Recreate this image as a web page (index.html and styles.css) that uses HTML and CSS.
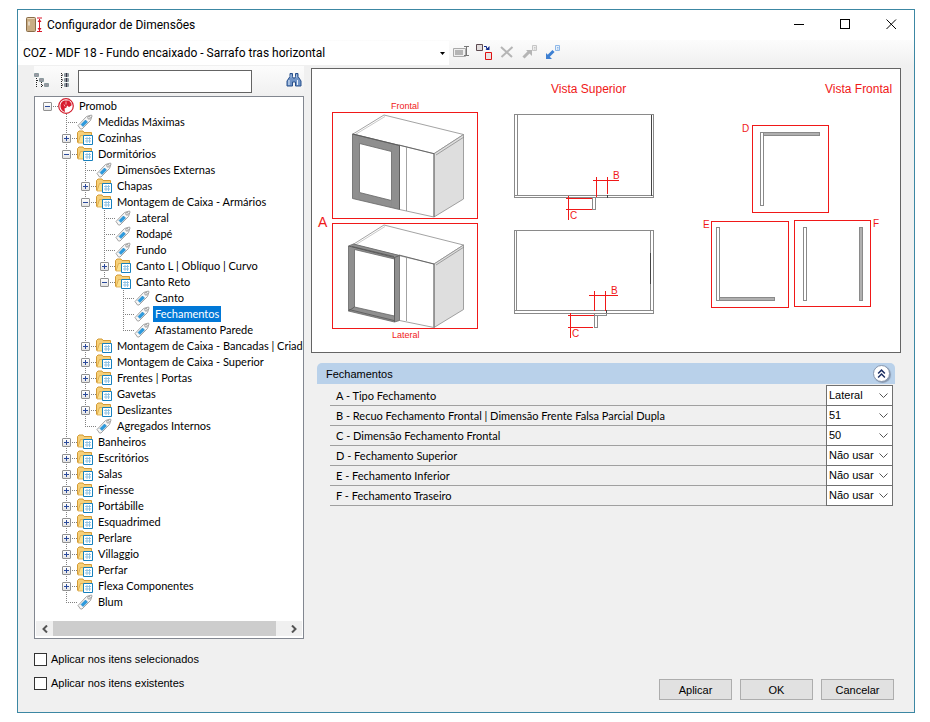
FILE: index.html
```html
<!DOCTYPE html>
<html lang="pt-BR">

<head>
    <meta charset="UTF-8" />
    <meta name="viewport" content="width=device-width, initial-scale=1.0" />
    <title>Configurador de Dimensões</title>
    <link rel="stylesheet" href="styles.css">
</head>

<body>
    <!-- shared icons -->
    <svg class="sprite" aria-hidden="true">
        <symbol id="tag" viewBox="0 0 16 16">
            <path d="M1 11.5 9.5 2.5 14.5 1 15 2 13.5 6.5 5 15 3.5 15z" fill="#f7f7f7" stroke="#999" stroke-width=".9" />
            <path d="M4 10.5 8.5 6 10.5 8 6 12.5z" fill="#2a9be0" stroke="#2080bd" stroke-width=".6" />
            <circle cx="12" cy="3.8" r="1.3" fill="#fff" stroke="#888" stroke-width=".8" />
        </symbol>
        <symbol id="folder" viewBox="0 0 16 16">
            <path d="M.5 12.5V2.5L2 1H6L7 2.5H14.5V8" fill="#f6d079" stroke="#d39a35" />
            <path d="M1 13 3.5 5.5H14.5V13z" fill="#fde18d" stroke="#d9a548" stroke-width=".8" />
            <path d="M6.500 5.500h9v9h-9z" fill="#fff" stroke="#1680bd" />
            <path d="M8 8.500h6M8 11h6M10 7v6M12.500 7v6" stroke="#8fc3e4" />
        </symbol>
        <symbol id="promob" viewBox="0 0 16 16">
            <circle cx="8" cy="8" r="7.300" fill="#fff" stroke="#d3202f" stroke-width="1.200" />
            <path d="M6 2.500C3.500 3.500 2 6 2.500 9 3 11.500 4.500 13.200 7 14L6.500 10.500 8.500 9.500 9 7.500 11 9 13.500 7.500 13.500 5.500 11 2.500z" fill="#d81e30" />
            <path d="M8 3.500v3M6 6.500l1 2" stroke="#fbd5d8" stroke-width=".8" />
        </symbol>
    </svg>

    <main class="window">
        <header class="title-bar">
            <svg class="app-icon" viewBox="0 0 17 16" aria-hidden="true">
                <rect x=".5" y=".5" width="9" height="14" rx="1" fill="#c9ad84" stroke="#8a6d49" />
                <path d="M1.500 1.500h7" stroke="#ead9ba" />
                <path d="M3 4.500v4" stroke="#fff" />
                <path d="M11 1h5M11 14.500h5M13.500 2v12" stroke="#d8172a" />
                <path d="M11.500 5 13.500 2l2 3zM11.500 11l2 3 2-3z" fill="#d8172a" />
            </svg>
            <h1 class="title">Configurador de Dimensões</h1>
            <div class="window-buttons">
                <button class="window-btn" aria-label="Minimizar"><svg viewBox="0 0 11 11"><path d="M0 5.500h10" /></svg></button>
                <button class="window-btn" aria-label="Maximizar"><svg viewBox="0 0 11 11"><path d="M.5 .5h9v9h-9z" /></svg></button>
                <button class="window-btn" aria-label="Fechar"><svg viewBox="0 0 11 11"><path class="smooth" d="M.5 .5l9.500 9.500M10 .5L.5 10" /></svg></button>
            </div>
        </header>

        <div class="toolbar">
            <select class="config-select" aria-label="Configuração">
                <option>COZ - MDF 18 - Fundo encaixado - Sarrafo tras horizontal</option>
            </select>
            <div class="tools">
                <button class="tool-btn" aria-label="Renomear">
                    <svg viewBox="0 0 16 16">
                        <path d="M.5 4.500h12v8H.5z" fill="#eee" stroke="#aaa" />
                        <path d="M2 6h8v5H2z" fill="#b4b4b4" />
                        <path d="M11 2.500h5M11 11.500h5M13.500 3v9" stroke="#777" />
                    </svg>
                </button>
                <button class="tool-btn" aria-label="Duplicar">
                    <svg viewBox="0 0 16 16">
                        <path d="M.5 .5h6v6h-6z" fill="#e3dede" stroke="#5d4a50" />
                        <path d="M9.500 8.500h6v7h-6z" fill="#e9e4e4" stroke="#df1111" />
                        <path d="M8 2.500h2.500v2h2" fill="none" stroke="#102a8a" />
                        <path d="M13.500 2v4h-4z" fill="#102a8a" />
                    </svg>
                </button>
                <button class="tool-btn" aria-label="Excluir">
                    <svg viewBox="0 0 16 16"><path d="M2 3l11 10M13.500 3l-11 10" fill="none" stroke="#b5b5b5" stroke-width="2" /></svg>
                </button>
                <button class="tool-btn" aria-label="Exportar">
                    <svg viewBox="0 0 16 16">
                        <path d="M1.500 13.500 7 8" stroke="#b5b5b5" stroke-width="3" />
                        <path d="M4 6h6v6z" fill="#b5b5b5" />
                        <path d="M10.500 1.500h4v5h-4zM12 3.500h1.500M12 5h1.500" fill="#eee" stroke="#c6c6c6" />
                    </svg>
                </button>
                <button class="tool-btn" aria-label="Importar">
                    <svg viewBox="0 0 16 16">
                        <path d="M3 12.500 8.500 7" stroke="#3e80d2" stroke-width="3" />
                        <path d="M1 9v6h6z" fill="#3e80d2" />
                        <path d="M10.500 1.500h4v5h-4zM12 3.500h1.500M12 5h1.500" fill="#e8f2fc" stroke="#8fb8e8" />
                    </svg>
                </button>
            </div>
        </div>

        <div class="content">
            <section class="sidebar">
                <div class="search-bar">
                    <button class="search-btn" aria-label="Recolher tudo">
                        <svg viewBox="0 0 16 16">
                            <path d="M2.500 5v10M7.500 9v6M3 7.500h3M8 12.500h3" fill="none" stroke="#222" stroke-dasharray="1 1" />
                            <path d="M.5 .5h4v3h-4zM5.500 5.500h4v3h-4zM10.500 10.500h4v3h-4z" fill="#fff" stroke="#8a9a9e" />
                            <path d="M1 2h3M6 7h3M11 12h3" stroke="#334" />
                        </svg>
                    </button>
                    <button class="search-btn" aria-label="Expandir tudo">
                        <svg viewBox="0 0 16 16">
                            <path d="M5.500 0v15M6 2h3M6 7h3M6 12h3" fill="none" stroke="#222" stroke-dasharray="1 1" />
                            <path d="M8.500 .5h4v3h-4zM8.500 5.500h4v3h-4zM8.500 10.500h4v3h-4z" fill="#fff" stroke="#8a9a9e" />
                            <path d="M9 2h3M9 7h3M9 12h3M10.500 0v4M10.500 5v4M10.500 10v4" stroke="#334" />
                        </svg>
                    </button>
                    <input class="search-input" type="text" aria-label="Pesquisar">
                    <button class="search-btn find-btn" aria-label="Localizar">
                        <svg viewBox="0 0 16 16">
                            <path d="M4 .5h2.500v3L7 5h2l.5-1.500v-3H12v3l3 4.500v5h-5.500V9h-3v4H1V8l3-4.500z" fill="#6f93c6" stroke="#29508c" />
                            <path d="M3 7v5M11.500 7v5" stroke="#e4eefb" />
                            <path d="M5 1.500v3M10.500 1.500v3" stroke="#a9c2e2" />
                        </svg>
                    </button>
                </div>

                <nav class="tree-box" aria-label="Dimensões">
                    <ul class="tree">
                        <li>
                            <div class="node"><button class="toggle open" aria-label="Recolher Promob"></button><svg class="icon"><use href="#promob" /></svg><a href="#" class="label">Promob</a></div>
                            <ul>
                                <li><div class="node leaf"><svg class="icon"><use href="#tag" /></svg><a href="#" class="label">Medidas Máximas</a></div></li>
                                <li><div class="node"><button class="toggle" aria-label="Expandir Cozinhas"></button><svg class="icon"><use href="#folder" /></svg><a href="#" class="label">Cozinhas</a></div></li>
                                <li>
                                    <div class="node"><button class="toggle open" aria-label="Recolher Dormitórios"></button><svg class="icon"><use href="#folder" /></svg><a href="#" class="label">Dormitórios</a></div>
                                    <ul>
                                        <li><div class="node leaf"><svg class="icon"><use href="#tag" /></svg><a href="#" class="label">Dimensões Externas</a></div></li>
                                        <li><div class="node"><button class="toggle" aria-label="Expandir Chapas"></button><svg class="icon"><use href="#folder" /></svg><a href="#" class="label">Chapas</a></div></li>
                                        <li>
                                            <div class="node"><button class="toggle open" aria-label="Recolher Armários"></button><svg class="icon"><use href="#folder" /></svg><a href="#" class="label">Montagem de Caixa - Armários</a></div>
                                            <ul>
                                                <li><div class="node leaf"><svg class="icon"><use href="#tag" /></svg><a href="#" class="label">Lateral</a></div></li>
                                                <li><div class="node leaf"><svg class="icon"><use href="#tag" /></svg><a href="#" class="label">Rodapé</a></div></li>
                                                <li><div class="node leaf"><svg class="icon"><use href="#tag" /></svg><a href="#" class="label">Fundo</a></div></li>
                                                <li><div class="node"><button class="toggle" aria-label="Expandir Canto L"></button><svg class="icon"><use href="#folder" /></svg><a href="#" class="label">Canto L | Oblíquo | Curvo</a></div></li>
                                                <li>
                                                    <div class="node"><button class="toggle open" aria-label="Recolher Canto Reto"></button><svg class="icon"><use href="#folder" /></svg><a href="#" class="label">Canto Reto</a></div>
                                                    <ul>
                                                        <li><div class="node leaf"><svg class="icon"><use href="#tag" /></svg><a href="#" class="label">Canto</a></div></li>
                                                        <li><div class="node leaf"><svg class="icon"><use href="#tag" /></svg><a href="#" class="label selected">Fechamentos</a></div></li>
                                                        <li><div class="node leaf"><svg class="icon"><use href="#tag" /></svg><a href="#" class="label">Afastamento Parede</a></div></li>
                                                    </ul>
                                                </li>
                                            </ul>
                                        </li>
                                        <li><div class="node"><button class="toggle" aria-label="Expandir Bancadas"></button><svg class="icon"><use href="#folder" /></svg><a href="#" class="label">Montagem de Caixa - Bancadas | Criado</a></div></li>
                                        <li><div class="node"><button class="toggle" aria-label="Expandir Superior"></button><svg class="icon"><use href="#folder" /></svg><a href="#" class="label">Montagem de Caixa - Superior</a></div></li>
                                        <li><div class="node"><button class="toggle" aria-label="Expandir Frentes"></button><svg class="icon"><use href="#folder" /></svg><a href="#" class="label">Frentes | Portas</a></div></li>
                                        <li><div class="node"><button class="toggle" aria-label="Expandir Gavetas"></button><svg class="icon"><use href="#folder" /></svg><a href="#" class="label">Gavetas</a></div></li>
                                        <li><div class="node"><button class="toggle" aria-label="Expandir Deslizantes"></button><svg class="icon"><use href="#folder" /></svg><a href="#" class="label">Deslizantes</a></div></li>
                                        <li><div class="node leaf"><svg class="icon"><use href="#tag" /></svg><a href="#" class="label">Agregados Internos</a></div></li>
                                    </ul>
                                </li>
                                <li><div class="node"><button class="toggle" aria-label="Expandir Banheiros"></button><svg class="icon"><use href="#folder" /></svg><a href="#" class="label">Banheiros</a></div></li>
                                <li><div class="node"><button class="toggle" aria-label="Expandir Escritórios"></button><svg class="icon"><use href="#folder" /></svg><a href="#" class="label">Escritórios</a></div></li>
                                <li><div class="node"><button class="toggle" aria-label="Expandir Salas"></button><svg class="icon"><use href="#folder" /></svg><a href="#" class="label">Salas</a></div></li>
                                <li><div class="node"><button class="toggle" aria-label="Expandir Finesse"></button><svg class="icon"><use href="#folder" /></svg><a href="#" class="label">Finesse</a></div></li>
                                <li><div class="node"><button class="toggle" aria-label="Expandir Portábille"></button><svg class="icon"><use href="#folder" /></svg><a href="#" class="label">Portábille</a></div></li>
                                <li><div class="node"><button class="toggle" aria-label="Expandir Esquadrimed"></button><svg class="icon"><use href="#folder" /></svg><a href="#" class="label">Esquadrimed</a></div></li>
                                <li><div class="node"><button class="toggle" aria-label="Expandir Perlare"></button><svg class="icon"><use href="#folder" /></svg><a href="#" class="label">Perlare</a></div></li>
                                <li><div class="node"><button class="toggle" aria-label="Expandir Villaggio"></button><svg class="icon"><use href="#folder" /></svg><a href="#" class="label">Villaggio</a></div></li>
                                <li><div class="node"><button class="toggle" aria-label="Expandir Perfar"></button><svg class="icon"><use href="#folder" /></svg><a href="#" class="label">Perfar</a></div></li>
                                <li><div class="node"><button class="toggle" aria-label="Expandir Flexa"></button><svg class="icon"><use href="#folder" /></svg><a href="#" class="label">Flexa Componentes</a></div></li>
                                <li><div class="node leaf"><svg class="icon"><use href="#tag" /></svg><a href="#" class="label">Blum</a></div></li>
                            </ul>
                        </li>
                    </ul>
                    <div class="scrollbar">
                        <button class="scroll-btn" aria-label="Rolar para a esquerda"><svg viewBox="0 0 8 8"><path d="M6 .5 2.500 4 6 7.500" /></svg></button>
                        <div class="scroll-track"><div class="scroll-thumb"></div></div>
                        <button class="scroll-btn" aria-label="Rolar para a direita"><svg viewBox="0 0 8 8"><path d="M2 .5 5.500 4 2 7.500" /></svg></button>
                    </div>
                </nav>

                <div class="checks">
                    <label class="check"><input type="checkbox">Aplicar nos itens selecionados</label>
                    <label class="check"><input type="checkbox">Aplicar nos itens existentes</label>
                </div>
            </section>

            <section class="main">
                <svg class="drawing" viewBox="312 69 588 283" role="img" aria-label="Vistas do fechamento">
                    <g class="title-text">
                        <text x="551" y="93">Vista Superior</text>
                        <text x="825" y="93">Vista Frontal</text>
                        <text class="big" x="318" y="227">A</text>
                    </g>
                    <g class="small-text">
                        <text x="391" y="109">Frontal</text>
                        <text x="392" y="338">Lateral</text>
                    </g>
                    <g class="mark-text">
                        <text x="613" y="179">B</text>
                        <text x="570" y="219">C</text>
                        <text x="611" y="294">B</text>
                        <text x="572" y="337">C</text>
                        <text x="742" y="132">D</text>
                        <text x="703" y="228">E</text>
                        <text x="873" y="227">F</text>
                    </g>

                    <!-- cabinet, front closing -->
                    <g class="outline">
                        <path d="M353 134 384 115 463.500 134.500 434 153.700z" fill="#fff" />
                        <path d="M354.500 135 385 116.500" stroke="#bbb" />
                        <path d="M434 153.700 463.500 134.500V199L434 217z" fill="#dedede" />
                        <path class="dark" d="M434 217V153.700L399 145" />
                        <path d="M436 155 464 137M399.500 209.500 434 217M406.500 147V211" />
                        <path class="frame" fill-rule="evenodd" d="M352.500 134 399.500 145.500V209.500L352.500 198.500zM359.500 143.500V192.500L391.500 200.500V151.500z" />
                        <path d="M359 136V143M359 192V200M391.500 144V151M391.500 200V207.500" />
                        <path class="dark" d="M352.500 134 399.500 145.500V209.500" />
                    </g>

                    <!-- cabinet, side closing -->
                    <g class="outline">
                        <path d="M353 244.500 384 225 463.500 245 434 264z" fill="#fff" />
                        <path d="M354.500 245.500 385 226.500" stroke="#bbb" />
                        <path d="M434 264 463.500 245V309.500L434 327.500z" fill="#dedede" />
                        <path class="dark" d="M434 327.500V264L399 255" />
                        <path d="M436 265 464 247M399.500 320.500 434 327.500M406.500 257V321" />
                        <path class="frame" fill-rule="evenodd" d="M348.500 246 353.500 244 399.500 255.500V320.500L394.500 322 348.500 311zM354.500 249.500V307L394.500 316V259z" />
                        <path class="dark" d="M348.500 246 394.500 257.500V322M394.500 257.500 399.500 255.500M348.500 311 354.500 307M349 309.500 394 320.500M352 246.500 394 256.500" />
                    </g>

                    <!-- top views -->
                    <g class="plan">
                        <path d="M514.500 114.500h139v83h-139zM514.500 195.500h139M517.500 114.500v81M592.500 197.500h3v12h-3z" />
                        <path class="plan-dark" d="M651.500 115v81M607.500 195v3" />
                        <path d="M514.500 230.500h139v83h-139zM514.500 310.500h139M516.500 230.500v80M594.500 313.500h12v2h-12zM594.500 315.500h3v12h-3z" />
                        <path d="M650.500 231v79" />
                        <path class="plan-dark" d="M650.500 253v31M606.500 310v3" />
                    </g>
                    <path class="dim" d="M566 198.500h26M566 209.500h26M568.500 196v24M593 180.500h26M596.500 177v20M607.500 177v17M568 315.500h26M568 327.500h25M570.500 313v25M589 295.500h29M594.500 291v20M605.500 291v20" />

                    <!-- front views -->
                    <g class="plan">
                        <path fill="#fff" d="M760.500 132.500h3v73h-3zM716.500 227.500h3v73h-3zM803.500 227.500h3v73h-3z" />
                        <path fill="#b0b0b0" d="M763.500 132.500h56v3h-56zM719.500 297.500h55v3h-55zM859.500 227.500h3v73h-3z" />
                    </g>
                    <path class="red-box" d="M332.500 112.500h145v106h-145zM332.500 223.500h145v105h-145zM752.500 125.500h76v87h-76zM711.500 221.500h77v86h-77zM794.500 220.500h76v86h-76z" />
                </svg>

                <div class="panel">
                    <div class="panel-header">
                        <h2 class="panel-title">Fechamentos</h2>
                        <button class="collapse-btn" aria-label="Recolher painel"><svg viewBox="0 0 8 8"><path d="M1 4 4 1l3 3M1 7.500l3-3 3 3" /></svg></button>
                    </div>
                    <div class="rows">
                        <div class="row">
                            <label for="campo-a">A - Tipo Fechamento</label>
                            <select id="campo-a"><option>Lateral</option><option>Frontal</option></select>
                        </div>
                        <div class="row">
                            <label for="campo-b">B - Recuo Fechamento Frontal | Dimensão Frente Falsa Parcial Dupla</label>
                            <select id="campo-b"><option>51</option></select>
                        </div>
                        <div class="row">
                            <label for="campo-c">C - Dimensão Fechamento Frontal</label>
                            <select id="campo-c"><option>50</option></select>
                        </div>
                        <div class="row">
                            <label for="campo-d">D - Fechamento Superior</label>
                            <select id="campo-d"><option>Não usar</option></select>
                        </div>
                        <div class="row">
                            <label for="campo-e">E - Fechamento Inferior</label>
                            <select id="campo-e"><option>Não usar</option></select>
                        </div>
                        <div class="row">
                            <label for="campo-f">F - Fechamento Traseiro</label>
                            <select id="campo-f"><option>Não usar</option></select>
                        </div>
                    </div>
                </div>

                <div class="actions">
                    <button class="btn">Aplicar</button>
                    <button class="btn">OK</button>
                    <button class="btn">Cancelar</button>
                </div>
            </section>
        </div>
    </main>
</body>

</html>
```
FILE: styles.css
```css
* {
    box-sizing: border-box;
}

body {
    margin: 0;
    padding: 9px 15px 9px 17px;
    min-height: 100vh;
    display: flex;
    background: #fff;
    color: #000;
    font-family: "Liberation Sans", Arial, sans-serif;
    font-size: 11px;
}

button,
input,
select {
    font: inherit;
    color: inherit;
    margin: 0;
    padding: 0;
    border-radius: 0;
}

button {
    border: none;
    background: none;
}

ul {
    margin: 0;
    padding: 0;
    list-style: none;
}

.sprite {
    display: none;
}

.window {
    flex: 1;
    display: flex;
    flex-direction: column;
    min-width: 0;
    border: 1px solid #3c87a3;
    background: #f0f0f0;
}

/* title bar */
.title-bar {
    display: flex;
    align-items: center;
    height: 30px;
    padding-left: 8px;
    background: #fff;
}

.app-icon {
    width: 17px;
    height: 16px;
    margin-right: 4px;
}

.title {
    flex: 1;
    margin: 0;
    font-family: Roboto, sans-serif;
    font-size: 12px;
    font-weight: 400;
}

.window-buttons {
    display: flex;
}

.window-btn {
    width: 46px;
    height: 28px;
}

.window-btn svg {
    width: 11px;
    height: 11px;
    fill: none;
    stroke: #000;
    shape-rendering: crispEdges;
}

.window-btn .smooth {
    shape-rendering: auto;
}

/* toolbar */
.toolbar {
    display: flex;
    align-items: center;
    height: 26px;
    background: linear-gradient(#fcfcfc, #f0f0f0);
}

.config-select {
    width: 431px;
    height: 24px;
    padding-left: 5px;
    border: none;
    appearance: none;
    background: #fff url("data:image/svg+xml,%3Csvg xmlns='http://www.w3.org/2000/svg' width='5' height='3'%3E%3Cpath d='M0 0h5L2.5 3z'/%3E%3C/svg%3E") no-repeat right 4px center;
    font-family: Roboto, sans-serif;
    font-size: 12px;
}

.tools {
    display: flex;
    gap: 7px;
    padding: 0 0 2px 4px;
}

.tool-btn {
    width: 16px;
    height: 16px;
}

.tool-btn svg,
.search-btn svg {
    display: block;
    width: 16px;
    height: 16px;
}

/* content */
.content {
    flex: 1;
    display: flex;
    gap: 7px;
    padding: 0 13px 0 16px;
}

.sidebar {
    display: flex;
    flex-direction: column;
    width: 270px;
    flex-shrink: 0;
}

.search-bar {
    display: flex;
    align-items: center;
    height: 30px;
    gap: 6px;
    padding-right: 2px;
    background: linear-gradient(#fcfcfc, #f0f0f0);
}

.search-input {
    width: 174px;
    height: 23px;
    padding: 0 4px;
    border: 1px solid #646464;
    background: #fff;
}

.find-btn {
    margin-left: auto;
}

/* tree */
.tree-box {
    flex: 1;
    display: flex;
    flex-direction: column;
    justify-content: space-between;
    border: 1px solid #828790;
    background: #fff;
}

.tree {
    padding: 1px 0 10px 8px;
    overflow: hidden;
}

.tree ul {
    margin-left: 19px;
}

.tree ul > li {
    background: repeating-linear-gradient(#808080 0 1px, transparent 1px 2px) 4px 0 / 1px 100% no-repeat;
}

.tree ul > li:last-child {
    background-size: 1px 8px;
}

.node {
    display: flex;
    align-items: center;
    height: 16px;
    white-space: nowrap;
    background: repeating-linear-gradient(90deg, #808080 0 1px, transparent 1px 2px) 4px 8px / 11px 1px no-repeat;
}

.node.leaf {
    padding-left: 15px;
}

.toggle {
    width: 9px;
    height: 9px;
    margin-right: 6px;
    flex-shrink: 0;
    border: 1px solid #919191;
    border-radius: 1px;
    background:
        linear-gradient(#2b4a9b, #2b4a9b) center / 5px 1px no-repeat,
        linear-gradient(#2b4a9b, #2b4a9b) center / 1px 5px no-repeat,
        linear-gradient(#fff, #e4e4e4);
}

.toggle.open {
    background:
        linear-gradient(#2b4a9b, #2b4a9b) center / 5px 1px no-repeat,
        linear-gradient(#fff, #e4e4e4);
}

.icon {
    width: 16px;
    height: 16px;
    margin-right: 3px;
    flex-shrink: 0;
}

.label {
    padding: 0 2px;
    line-height: 16px;
    font-family: Lato, sans-serif;
    color: #000;
    text-decoration: none;
}

.label.selected {
    background: #0078d7;
    color: #fff;
}

.scrollbar {
    display: flex;
    height: 17px;
    padding: 0 1px 2px;
}

.scroll-btn {
    width: 17px;
    background: #f0f0f0;
}

.scroll-btn svg {
    display: block;
    width: 8px;
    height: 8px;
    margin: auto;
    fill: none;
    stroke: #555;
    stroke-width: 2;
}

.scroll-track {
    flex: 1;
    display: flex;
    background: #f0f0f0;
}

.scroll-thumb {
    width: 96%;
    background: #cdcdcd;
}

/* check boxes */
.checks {
    padding: 8px 0 17px;
}

.check {
    display: flex;
    align-items: center;
    gap: 4px;
    height: 24px;
}

.check input {
    width: 13px;
    height: 13px;
    appearance: none;
    border: 1px solid #333;
    background: #fff;
}

.check input:checked {
    background: #0078d7;
}

/* right side */
.main {
    flex: 1;
    display: flex;
    flex-direction: column;
    min-width: 0;
    padding-top: 2px;
}

.drawing {
    width: 100%;
    border: 1px solid #646464;
    background: #fff;
}

.drawing text {
    fill: #f01818;
}

.title-text {
    font-size: 12px;
}

.title-text .big {
    font-size: 14px;
}

.small-text {
    font-size: 9px;
}

.mark-text {
    font-size: 10px;
}

.outline {
    fill: none;
    stroke: #8c8c8c;
    stroke-width: 0.8;
}

.outline .dark {
    stroke: #555;
}

.outline .frame {
    fill: #8f8f8f;
    stroke: #666;
}

.plan {
    fill: none;
    stroke: #8a8a8a;
    shape-rendering: crispEdges;
}

.plan-dark {
    stroke: #444;
}

.dim,
.red-box {
    fill: none;
    stroke: #f01818;
    shape-rendering: crispEdges;
}

.panel {
    padding: 10px 6px 0;
}

.panel-header {
    display: flex;
    align-items: center;
    justify-content: space-between;
    height: 21px;
    padding: 0 5px 0 9px;
    border-radius: 5px 5px 0 0;
    background: #b9d1ea;
}

.panel-title {
    margin: 0;
    font-size: 11px;
    font-weight: 400;
}

.collapse-btn {
    width: 17px;
    height: 17px;
    border: 1px solid #8797ae;
    border-radius: 50%;
    background: #fff;
    box-shadow: 1px 1px 1px #8797ae;
}

.collapse-btn svg {
    display: block;
    width: 9px;
    height: 9px;
    margin: auto;
    fill: none;
    stroke: #1d2f63;
    stroke-width: 1.3;
}

.rows {
    padding: 1px 2px 0 13px;
}

.row {
    display: flex;
    align-items: stretch;
    height: 20px;
    border-bottom: 1px solid #a0a0a0;
}

.row:first-child {
    height: 21px;
}

.row label {
    flex: 1;
    padding-left: 6px;
    font-family: Lato, sans-serif;
    line-height: 20px;
}

.row:first-child label {
    padding-top: 1px;
}

.row select {
    width: 67px;
    margin-bottom: -1px;
    padding: 0 0 1px 2px;
    border: 1px solid #707070;
    border-top: none;
    appearance: none;
    background: #fff url("data:image/svg+xml,%3Csvg xmlns='http://www.w3.org/2000/svg' width='9' height='5'%3E%3Cpath d='M.5 .5l4 4 4-4' fill='none' stroke='%23555'/%3E%3C/svg%3E") no-repeat right 4px center;
}

.row:first-child select {
    border-top: 1px solid #707070;
}

/* bottom buttons */
.actions {
    display: flex;
    justify-content: flex-end;
    gap: 8px;
    margin-top: auto;
    padding: 0 7px 12px 0;
}

.btn {
    width: 73px;
    height: 21px;
    border: 1px solid #adadad;
    background: #e1e1e1;
}
```
